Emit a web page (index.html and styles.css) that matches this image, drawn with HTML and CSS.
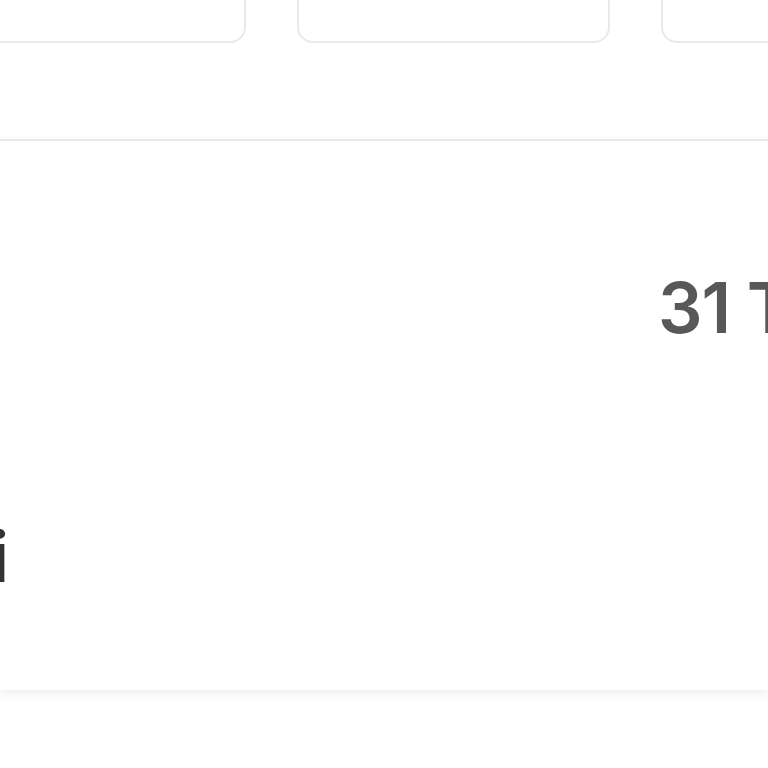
FILE: index.html
```html
<!DOCTYPE html>
<html lang="en">

<head>
    <meta charset="UTF-8">
    <meta name="viewport" content="width=device-width, initial-scale=1.0">
    <title>Today</title>
    <link rel="stylesheet" href="styles.css">
</head>

<body>

    <div class="cards">
        <div class="card"></div>
        <div class="card"></div>
        <div class="card"></div>
    </div>

    <div class="panel">
        <div class="date-row">
            <div class="date">31 Thg 5</div>
        </div>
        <div class="greeting-row">
            <div class="greeting">Xin chào, Mai</div>
        </div>
    </div>

</body>

</html>
```

FILE: styles.css
```css
body {
    font-family: 'Inter', 'Liberation Sans', Arial, sans-serif;
    background-color: #fff;
    margin: 0;
    padding: 0;
    width: 768px;
    height: 768px;
    overflow: hidden;
}

.cards {
    display: flex;
    gap: 51px;
    margin-top: -77px;
    margin-left: -67px;
}

.card {
    flex: 0 0 313px;
    height: 120px;
    box-sizing: border-box;
    border: 2px solid #e9e9e9;
    border-radius: 16px;
    background-color: #fff;
}

.panel {
    margin-top: 96px;
    height: 551px;
    box-sizing: border-box;
    border-top: 2px solid #e9e9e9;
    background-color: #fff;
    box-shadow: 0 3px 10px rgba(0, 0, 0, 0.08);
    display: flex;
    flex-direction: column;
}

.date-row {
    display: flex;
    justify-content: flex-end;
    margin-top: 132px;
}

.date {
    width: 110px;
    white-space: nowrap;
    font-size: 70px;
    line-height: 1;
    font-weight: 600;
    letter-spacing: -1px;
    color: #585858;
}

.greeting-row {
    margin-top: 179px;
}

.greeting {
    width: 9px;
    display: flex;
    justify-content: flex-end;
    white-space: nowrap;
    font-size: 70px;
    line-height: 1;
    font-weight: 600;
    color: #333;
}
```
